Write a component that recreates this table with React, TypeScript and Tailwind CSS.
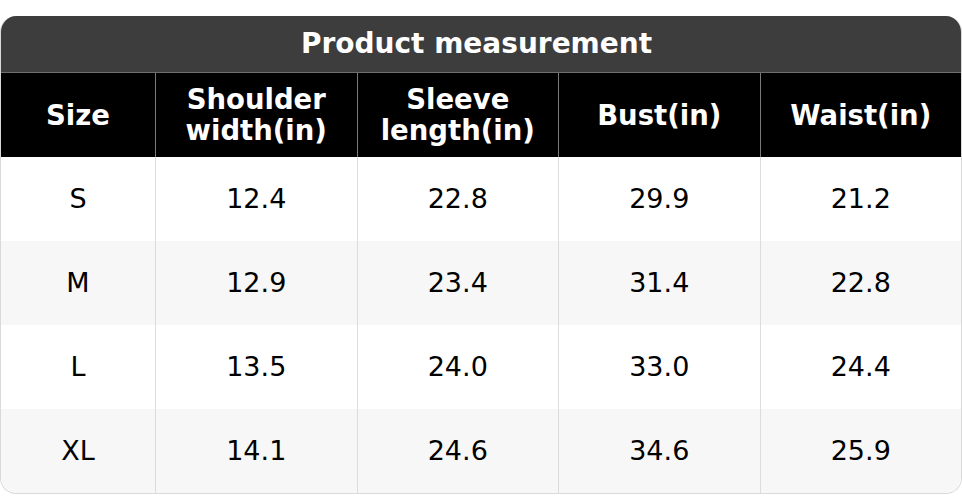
const headers = ["Size", "Shoulder\nwidth(in)", "Sleeve\nlength(in)", "Bust(in)", "Waist(in)"];

const rows = [
  ["S", "12.4", "22.8", "29.9", "21.2"],
  ["M", "12.9", "23.4", "31.4", "22.8"],
  ["L", "13.5", "24.0", "33.0", "24.4"],
  ["XL", "14.1", "24.6", "34.6", "25.9"],
];

export default function App() {
  return (
    <div
      className="h-[496px] w-[962px] bg-white pt-4"
      style={{ fontFamily: '"DejaVu Sans", Verdana, sans-serif' }}
    >
      <div className="overflow-hidden rounded-[16px] border border-t-0 border-[#d9d9d9]">
        {/* Title */}
        <div className="flex h-[57px] items-center justify-center border-b border-[#6e6e6e] bg-[#3d3d3d] pr-[9px] text-[28px] font-bold text-white">
          Product measurement
        </div>

        {/* Header */}
        <div className="grid h-[84px] grid-cols-[154px_repeat(4,1fr)] bg-black text-white">
          {headers.map((h, i) => (
            <div
              key={h}
              className={`flex items-center justify-center whitespace-pre-line text-center text-[27.5px] font-bold leading-[31px] ${
                i > 0 ? "border-l border-[#7a7a7a]" : ""
              }`}
            >
              {h}
            </div>
          ))}
        </div>

        {/* Body */}
        {rows.map((r, ri) => (
          <div
            key={r[0]}
            className={`grid h-[84px] grid-cols-[154px_repeat(4,1fr)] text-black ${
              ri % 2 === 1 ? "bg-[#f7f7f7]" : "bg-white"
            }`}
          >
            {r.map((c, i) => (
              <div
                key={i}
                className={`flex items-center justify-center text-[27px] ${
                  i > 0 ? "border-l border-[#dcdcdc]" : ""
                }`}
              >
                {c}
              </div>
            ))}
          </div>
        ))}
      </div>
    </div>
  );
}
